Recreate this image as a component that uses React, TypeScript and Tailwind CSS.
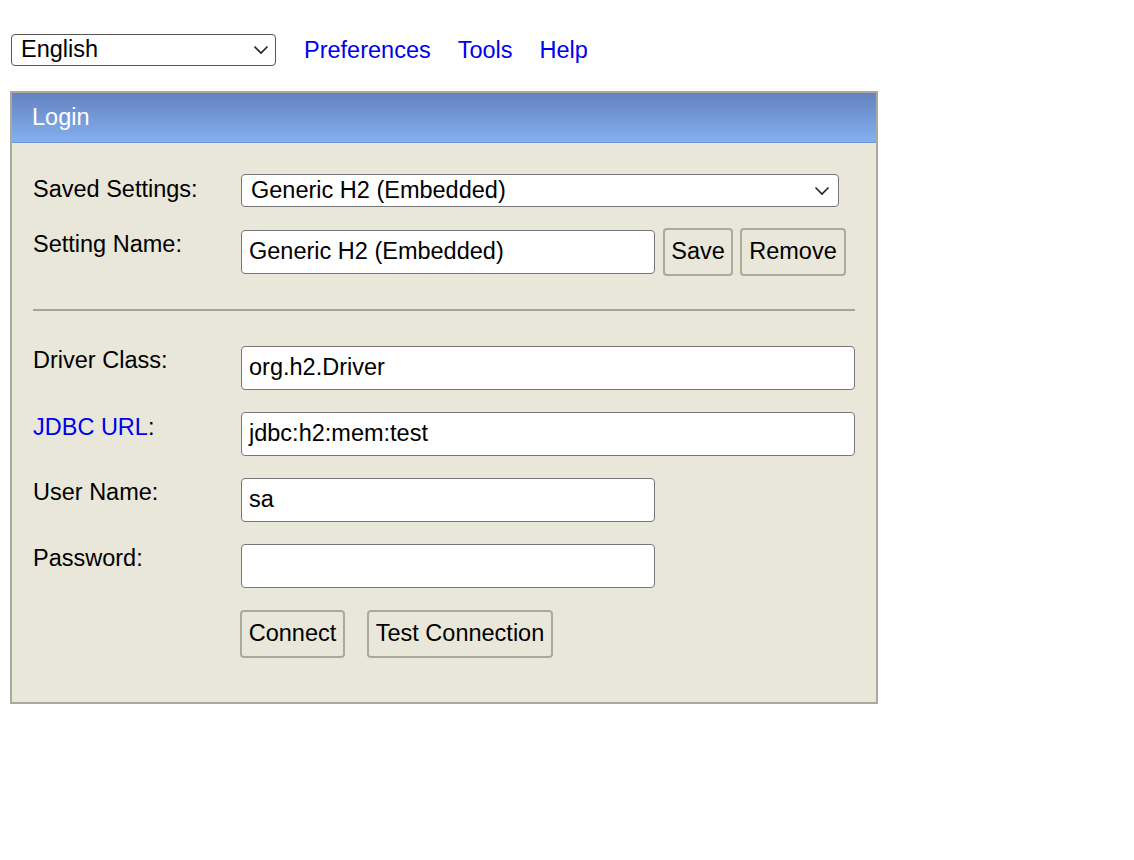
import React from "react";

// Boîte de sélection maison : texte + chevron fin
function SelectBox({ value, className }: { value: string; className: string }) {
  return (
    <div
      className={`flex items-center justify-between rounded-[4px] bg-white ${className}`}
    >
      <span className="leading-none">{value}</span>
      <svg width="16" height="10" viewBox="0 0 16 10" className="shrink-0">
        <polyline
          points="1.5,1.5 8,8 14.5,1.5"
          fill="none"
          stroke="#222"
          strokeWidth="1.6"
        />
      </svg>
    </div>
  );
}

function TextBox({ value, className }: { value: string; className: string }) {
  return (
    <div
      className={`flex h-[44px] items-center rounded-[4px] border-[1.5px] border-[#777] bg-white pl-[7px] ${className}`}
    >
      <span className="leading-none">{value}</span>
    </div>
  );
}

function Btn({ label, className = "" }: { label: string; className?: string }) {
  return (
    <div
      className={`flex h-[48px] items-center justify-center rounded-[4px] border-[2px] border-[#aba99c] bg-[#e9e7d9] ${className}`}
    >
      {label}
    </div>
  );
}

function Row({
  label,
  pt,
  children,
  className = "",
}: {
  label: React.ReactNode;
  pt: string;
  children: React.ReactNode;
  className?: string;
}) {
  return (
    <div className={`flex items-start ${className}`}>
      <div className={`w-[208px] shrink-0 leading-[27px] ${pt}`}>{label}</div>
      {children}
    </div>
  );
}

export default function App() {
  return (
    <div className="min-h-screen bg-white font-['Liberation_Sans',Arial,sans-serif] text-[23.5px] text-black">
      <div className="flex h-[32px] items-center pl-[11px] mt-[34px]">
        <SelectBox
          value="English"
          className="h-[32px] w-[265px] border-[1.5px] border-[#555] pl-[9px] pr-[6px]"
        />
        <nav className="ml-[28px] flex gap-[27px] leading-[32px] text-[#0000ee]">
          <a href="#">Preferences</a>
          <a href="#">Tools</a>
          <a href="#">Help</a>
        </nav>
      </div>

      <div className="ml-[10px] mt-[25px] w-[868px] border-[2px] border-[#aba99b] bg-[#e9e7d9]">
        <div className="flex h-[50px] items-center border-b border-[#6e93d2] bg-gradient-to-b from-[#6382bf] to-[#85b0f0] pl-[20px] text-white">
          Login
        </div>

        <div className="pb-[44px] pl-[21px] pr-[21px] pt-[31px]">
          <Row label="Saved Settings:" pt="pt-[2px]">
            <SelectBox
              value="Generic H2 (Embedded)"
              className="h-[33px] w-[598px] border-[1.5px] border-[#777] pl-[9px] pr-[8px]"
            />
          </Row>

          <Row label="Setting Name:" pt="pt-[3px]" className="mt-[21px]">
            <div className="flex items-center">
              <TextBox value="Generic H2 (Embedded)" className="w-[414px]" />
              <Btn label="Save" className="ml-[8px] w-[70px]" />
              <Btn label="Remove" className="ml-[7px] w-[106px]" />
            </div>
          </Row>

          <div className="mt-[33px] h-[2px] w-[822px] bg-[#a3a3a0]" />

          <Row label="Driver Class:" pt="pt-[1px]" className="mt-[35px]">
            <TextBox value="org.h2.Driver" className="w-[614px]" />
          </Row>

          <Row
            label={
              <>
                <span className="text-[#0000ee]">JDBC URL</span>:
              </>
            }
            pt="pt-[2px]"
            className="mt-[22px]"
          >
            <TextBox value="jdbc:h2:mem:test" className="w-[614px]" />
          </Row>

          <Row label="User Name:" pt="pt-[1px]" className="mt-[22px]">
            <TextBox value="sa" className="w-[414px]" />
          </Row>

          <Row label="Password:" pt="pt-[1px]" className="mt-[22px]">
            <TextBox value="" className="w-[414px]" />
          </Row>

          <div className="ml-[207px] mt-[22px] flex gap-[22px]">
            <Btn label="Connect" className="w-[105px]" />
            <Btn label="Test Connection" className="w-[186px]" />
          </div>
        </div>
      </div>
    </div>
  );
}
